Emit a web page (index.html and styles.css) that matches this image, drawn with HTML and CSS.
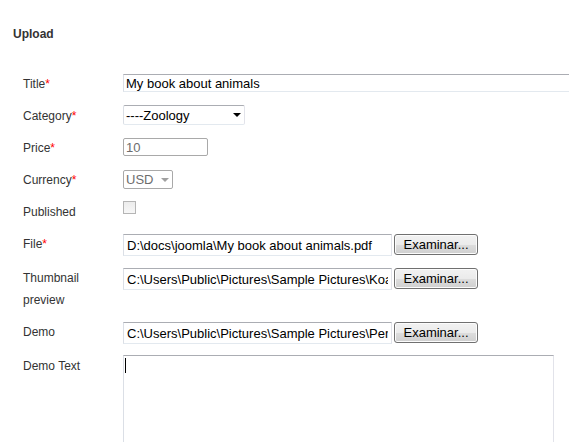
FILE: index.html
```html
<!DOCTYPE html>
<html>
<head>
<meta charset="utf-8">
<link rel="stylesheet" href="styles.css">
</head>
<body>
<div class="page">
  <h2 class="title">Upload</h2>
  <form class="form">
    <div class="row">
      <label class="lbl">Title<span class="req">*</span></label>
      <div class="field"><input class="text wide" type="text" value="My book about animals"></div>
    </div>
    <div class="row">
      <label class="lbl">Category<span class="req">*</span></label>
      <div class="field"><span class="select cat"><span class="sel-text">----Zoology</span><span class="arrow"></span></span></div>
    </div>
    <div class="row">
      <label class="lbl">Price<span class="req">*</span></label>
      <div class="field"><input class="text price" type="text" value="10" disabled></div>
    </div>
    <div class="row">
      <label class="lbl">Currency<span class="req">*</span></label>
      <div class="field"><span class="select cur disabled"><span class="sel-text">USD</span><span class="arrow"></span></span></div>
    </div>
    <div class="row">
      <label class="lbl">Published</label>
      <div class="field"><span class="check"></span></div>
    </div>
    <div class="row">
      <label class="lbl">File<span class="req">*</span></label>
      <div class="field file"><input class="text path" type="text" value="D:\docs\joomla\My book about animals.pdf"><button type="button" class="btn">Examinar...</button></div>
    </div>
    <div class="row">
      <label class="lbl">Thumbnail<br>preview</label>
      <div class="field file"><input class="text path" type="text" value="C:\Users\Public\Pictures\Sample Pictures\Koala.jpg"><button type="button" class="btn">Examinar...</button></div>
    </div>
    <div class="row">
      <label class="lbl">Demo</label>
      <div class="field file"><input class="text path" type="text" value="C:\Users\Public\Pictures\Sample Pictures\Penguins.jpg"><button type="button" class="btn">Examinar...</button></div>
    </div>
    <div class="row">
      <label class="lbl">Demo Text</label>
      <div class="field"><span class="ta-wrap"><textarea class="ta"></textarea><span class="caret"></span></span></div>
    </div>
  </form>
</div>
</body>
</html>
```
FILE: styles.css
```css
html, body {
  margin: 0;
  padding: 0;
  background: #fff;
  overflow: hidden;
}
body {
  font-family: "Liberation Sans", Arial, sans-serif;
  color: #333;
}
.page {
  padding: 27px 0 0 13px;
}
.title {
  margin: 0;
  font-size: 12px;
  font-weight: bold;
  line-height: 14px;
  color: #333;
}
.form {
  margin: 27px 0 0 10px;
}
.row {
  display: grid;
  grid-template-columns: 100px 1fr;
  align-items: start;
  padding: 5px 0;
}
.lbl {
  font-size: 12px;
  line-height: 22px;
  color: #333;
}
.req {
  color: #f00;
}
.field {
  display: flex;
  align-items: flex-start;
  min-width: 0;
}
.field > * {
  flex: none;
}
.text {
  box-sizing: border-box;
  margin: 0;
  padding: 0 2px;
  font-family: "Liberation Sans", Arial, sans-serif;
  font-size: 13px;
  color: #000;
  background: #fff;
  border: 1px solid;
  border-color: #abadb3 #e2e3ea #e3e9ef #dbdfe6;
  outline: none;
}
.wide {
  width: 500px;
  height: 18px;
  margin-top: 1px;
}
.price {
  width: 85px;
  height: 18px;
  margin-top: 1px;
  border: 1px solid #a9a9a9;
  border-radius: 2px;
  color: #6d6d6d;
}
.select {
  position: relative;
  box-sizing: border-box;
  display: flex;
  align-items: center;
  height: 20px;
  border: 1px solid #abadb3;
  border-color: #abadb3 #e2e3ea #e3e9ef #dbdfe6;
  border-radius: 2px;
  font-size: 13px;
  color: #000;
  padding-left: 2px;
  background: #fff;
}
.cat {
  width: 122px;
}
.cur {
  width: 50px;
  height: 19px;
  margin-top: 1px;
  border: 1px solid #a9a9a9;
  color: #6d6d6d;
}
.arrow {
  position: absolute;
  right: 4px;
  top: 7px;
  width: 0;
  height: 0;
  border-left: 4px solid transparent;
  border-right: 4px solid transparent;
  border-top: 4px solid #000;
}
.cat .arrow {
  right: 3px;
}
.cur .arrow {
  border-top-color: #a0a0a0;
  right: 3px;
}
.check {
  display: block;
  box-sizing: border-box;
  width: 13px;
  height: 13px;
  border: 1px solid #b5b5b5;
  background: linear-gradient(#ececec, #f7f7f7);
}
.path {
  width: 269px;
  height: 22px;
  margin: 1px 0;
  padding: 0 3px;
}
.btn {
  box-sizing: border-box;
  width: 84px;
  height: 21px;
  margin: 1px 0 0 2px;
  padding: 0;
  font-family: "Liberation Sans", Arial, sans-serif;
  font-size: 13px;
  color: #000;
  border: 1px solid #707070;
  border-radius: 3px;
  background: linear-gradient(#f2f2f2 0%, #ebebeb 50%, #dddddd 51%, #cfcfcf 100%);
  box-shadow: inset 0 0 0 1px #fcfcfc;
}
.ta-wrap {
  position: relative;
  display: block;
}
.ta {
  display: block;
  box-sizing: border-box;
  width: 431px;
  height: 100px;
  margin: 0;
  resize: none;
  border: 1px solid;
  border-color: #abadb3 #e2e3ea #e3e9ef #dbdfe6;
  outline: none;
  font-family: "Liberation Sans", Arial, sans-serif;
  font-size: 13px;
}
.caret {
  position: absolute;
  left: 2px;
  top: 3px;
  width: 1px;
  height: 15px;
  background: #000;
}
```
